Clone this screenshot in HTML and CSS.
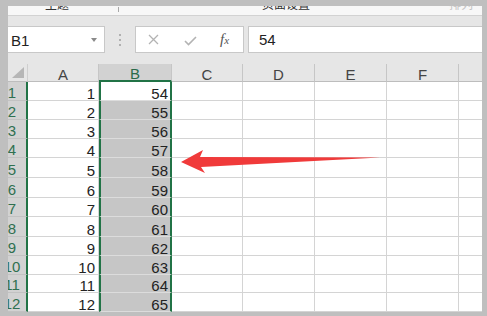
FILE: index.html
```html
<!DOCTYPE html>
<html lang="zh-CN">
<head>
    <meta charset="UTF-8">
    <title>B1 - 54</title>
    <link rel="stylesheet" href="styles.css">
</head>
<body>

<div class="frame"></div>

<!-- ribbon group labels, mostly cut off by the window edge -->
<div class="ribbon">
    <span class="rb-label rb-theme">主题</span>
    <span class="rb-sep"></span>
    <span class="rb-label rb-page">页面设置</span>
    <span class="rb-label rb-more">排列</span>
</div>

<!-- name box + formula bar -->
<div class="toolbar">
    <div class="name-box">
        <span>B1</span>
        <span class="drop"></span>
    </div>
    <div class="grip"><i></i><i></i><i></i></div>
    <div class="fx-buttons">
        <svg class="ic-cancel" width="11" height="11" viewBox="0 0 11 11">
            <path d="M1 1 L10 10 M10 1 L1 10" stroke="#b3b3b3" stroke-width="1.3" fill="none"/>
        </svg>
        <svg class="ic-enter" width="13" height="10" viewBox="0 0 13 10">
            <path d="M1 5 L4.5 8.5 L12 1" stroke="#b3b3b3" stroke-width="1.6" fill="none"/>
        </svg>
        <span class="ic-fx"><i>f</i><i class="x">x</i></span>
    </div>
    <div class="formula">54</div>
</div>

<!-- worksheet -->
<div class="sheet">
    <div class="row head">
        <div class="rh corner"><span class="tri"></span></div>
        <div class="ch">A</div>
        <div class="ch sel">B</div>
        <div class="ch">C</div>
        <div class="ch">D</div>
        <div class="ch">E</div>
        <div class="ch">F</div>
        <div class="ch"></div>
    </div>
    <div class="row r19"><div class="rh"><span>1</span></div><div class="c"><span>1</span></div><div class="c b active"><span>54</span></div><div class="c"></div><div class="c"></div><div class="c"></div><div class="c"></div><div class="c"></div></div>
    <div class="row r19"><div class="rh"><span>2</span></div><div class="c"><span>2</span></div><div class="c b"><span>55</span></div><div class="c"></div><div class="c"></div><div class="c"></div><div class="c"></div><div class="c"></div></div>
    <div class="row r19"><div class="rh"><span>3</span></div><div class="c"><span>3</span></div><div class="c b"><span>56</span></div><div class="c"></div><div class="c"></div><div class="c"></div><div class="c"></div><div class="c"></div></div>
    <div class="row r19"><div class="rh"><span>4</span></div><div class="c"><span>4</span></div><div class="c b"><span>57</span></div><div class="c"></div><div class="c"></div><div class="c"></div><div class="c"></div><div class="c"></div></div>
    <div class="row r20"><div class="rh"><span>5</span></div><div class="c"><span>5</span></div><div class="c b"><span>58</span></div><div class="c"></div><div class="c"></div><div class="c"></div><div class="c"></div><div class="c"></div></div>
    <div class="row r20"><div class="rh"><span>6</span></div><div class="c"><span>6</span></div><div class="c b"><span>59</span></div><div class="c"></div><div class="c"></div><div class="c"></div><div class="c"></div><div class="c"></div></div>
    <div class="row r19"><div class="rh"><span>7</span></div><div class="c"><span>7</span></div><div class="c b"><span>60</span></div><div class="c"></div><div class="c"></div><div class="c"></div><div class="c"></div><div class="c"></div></div>
    <div class="row r20"><div class="rh"><span>8</span></div><div class="c"><span>8</span></div><div class="c b"><span>61</span></div><div class="c"></div><div class="c"></div><div class="c"></div><div class="c"></div><div class="c"></div></div>
    <div class="row r19"><div class="rh"><span>9</span></div><div class="c"><span>9</span></div><div class="c b"><span>62</span></div><div class="c"></div><div class="c"></div><div class="c"></div><div class="c"></div><div class="c"></div></div>
    <div class="row r19"><div class="rh"><span>10</span></div><div class="c"><span>10</span></div><div class="c b"><span>63</span></div><div class="c"></div><div class="c"></div><div class="c"></div><div class="c"></div><div class="c"></div></div>
    <div class="row r18"><div class="rh"><span>11</span></div><div class="c"><span>11</span></div><div class="c b"><span>64</span></div><div class="c"></div><div class="c"></div><div class="c"></div><div class="c"></div><div class="c"></div></div>
    <div class="row r19"><div class="rh"><span>12</span></div><div class="c"><span>12</span></div><div class="c b"><span>65</span></div><div class="c"></div><div class="c"></div><div class="c"></div><div class="c"></div><div class="c"></div></div>
</div>

<!-- red annotation arrow pointing at column B -->
<svg class="arrow" width="487" height="316" viewBox="0 0 487 316">
    <polygon points="181,162 203,150 200,157 380,157.5 201,167 205,173" fill="#f03a3a"/>
</svg>

</body>
</html>
```

FILE: styles.css
```css
:root {
    --frame: #bfbfbf;
    --bar-bg: #e6e6e6;
    --grid: #d4d4d4;
    --green: #217346;
    --sel-fill: #c6c6c6;
    --font: "Liberation Sans", "Noto Sans CJK SC", sans-serif;
}

* { box-sizing: border-box; }

body {
    margin: 0;
    width: 487px;
    height: 316px;
    overflow: hidden;
    position: relative;
    background: #fff;
    font-family: var(--font);
    color: #222;
}

/* grey window edge drawn over everything */
.frame {
    position: absolute;
    inset: 0;
    border-style: solid;
    border-color: var(--frame);
    border-width: 6px 5px 4px 8px;
    pointer-events: none;
    z-index: 5;
}

.ribbon {
    height: 16px;
    background: #f7f7f7;
    border-bottom: 1px solid #d2d2d2;
    display: flex;
    align-items: flex-end;
    overflow: hidden;
}

.rb-label {
    font-size: 12px;
    line-height: 12px;
    color: #333;
    margin-bottom: 4px;
    white-space: nowrap;
}

.rb-theme { margin-left: 45px; width: 73px; }

.rb-sep {
    width: 1px;
    height: 5px;
    background: #a8a8a8;
    margin-bottom: 3px;
}

.rb-page { margin-left: 143px; }

.rb-more {
    margin-left: auto;
    margin-right: 14px;
    color: #c4c4c4;
}

.toolbar {
    height: 48px;
    background: var(--bar-bg);
    display: flex;
    align-items: flex-start;
    padding-top: 10px;
}

.name-box {
    width: 105px;
    height: 27px;
    background: #fff;
    border: 1px solid #c8c8c8;
    border-left: none;
    display: flex;
    align-items: center;
    justify-content: space-between;
    padding: 2px 7px 0 11px;
    font-size: 15px;
}

.drop {
    width: 0;
    height: 0;
    border-left: 3.5px solid transparent;
    border-right: 3.5px solid transparent;
    border-top: 4px solid #8a8a8a;
    margin-top: -2px;
}

.grip {
    margin-left: 14px;
    padding-top: 8px;
    display: flex;
    flex-direction: column;
    gap: 3px;
}

.grip i {
    width: 2px;
    height: 2px;
    background: #b0b0b0;
}

.fx-buttons {
    margin-left: 14px;
    width: 109px;
    height: 27px;
    background: #fff;
    border: 1px solid #c8c8c8;
    display: flex;
    align-items: center;
    padding-left: 12px;
}

.ic-enter { margin-left: 25px; margin-top: 2px; }

.ic-fx {
    margin-left: 23px;
    font-family: "Liberation Serif", serif;
    font-size: 15px;
    color: #555;
}

.ic-fx .x { font-size: 11px; }

.formula {
    margin-left: 4px;
    flex: 1;
    height: 27px;
    background: #fff;
    border: 1px solid #c8c8c8;
    padding: 3px 0 0 10px;
    font-size: 15px;
    line-height: 20px;
}

/* worksheet grid */
.row {
    display: grid;
    grid-template-columns: 28px 71px 73px 71px 72px 72px 72px 28px;
    font-size: 15px;
}

.row.head { height: 18px; }
.r18 { height: 18px; }
.r19 { height: 19px; }
.r20 { height: 20px; }

.rh {
    background: #d2d2d2;
    color: #2f7050;
    border-right: 2px solid var(--green);
    border-bottom: 1px solid #c2c2c2;
    display: flex;
    align-items: flex-end;
    justify-content: center;
    line-height: 12px;
    padding: 0 2px 1px 0;
}

.rh.corner {
    background: var(--bar-bg);
    border-right: 1px solid #cfcfcf;
    border-bottom: 1px solid #bdbdbd;
    align-items: stretch;
    position: relative;
}

.tri {
    position: absolute;
    right: 3px;
    bottom: 3px;
    width: 0;
    height: 0;
    border-left: 12px solid transparent;
    border-bottom: 11px solid #b6b6b6;
}

.ch {
    background: var(--bar-bg);
    color: #444;
    border-right: 1px solid #c6c6c6;
    border-bottom: 1px solid #bdbdbd;
    display: flex;
    align-items: flex-end;
    justify-content: center;
    line-height: 12px;
}

.ch.sel {
    background: #d2d2d2;
    color: #2b6b4a;
    border-bottom: 2px solid var(--green);
    line-height: 13px;
}

.c {
    border-right: 1px solid var(--grid);
    border-bottom: 1px solid var(--grid);
    display: flex;
    align-items: flex-end;
    justify-content: flex-end;
    padding-right: 3px;
    line-height: 12px;
}

.c.b {
    background: var(--sel-fill);
    border-left: 2px solid var(--green);
    border-right: 2px solid var(--green);
    border-bottom-color: #dcdcdc;
    padding-right: 2px;
}

.c.b.active { background: #fff; }

.arrow {
    position: absolute;
    left: 0;
    top: 0;
    pointer-events: none;
    z-index: 4;
}
```
